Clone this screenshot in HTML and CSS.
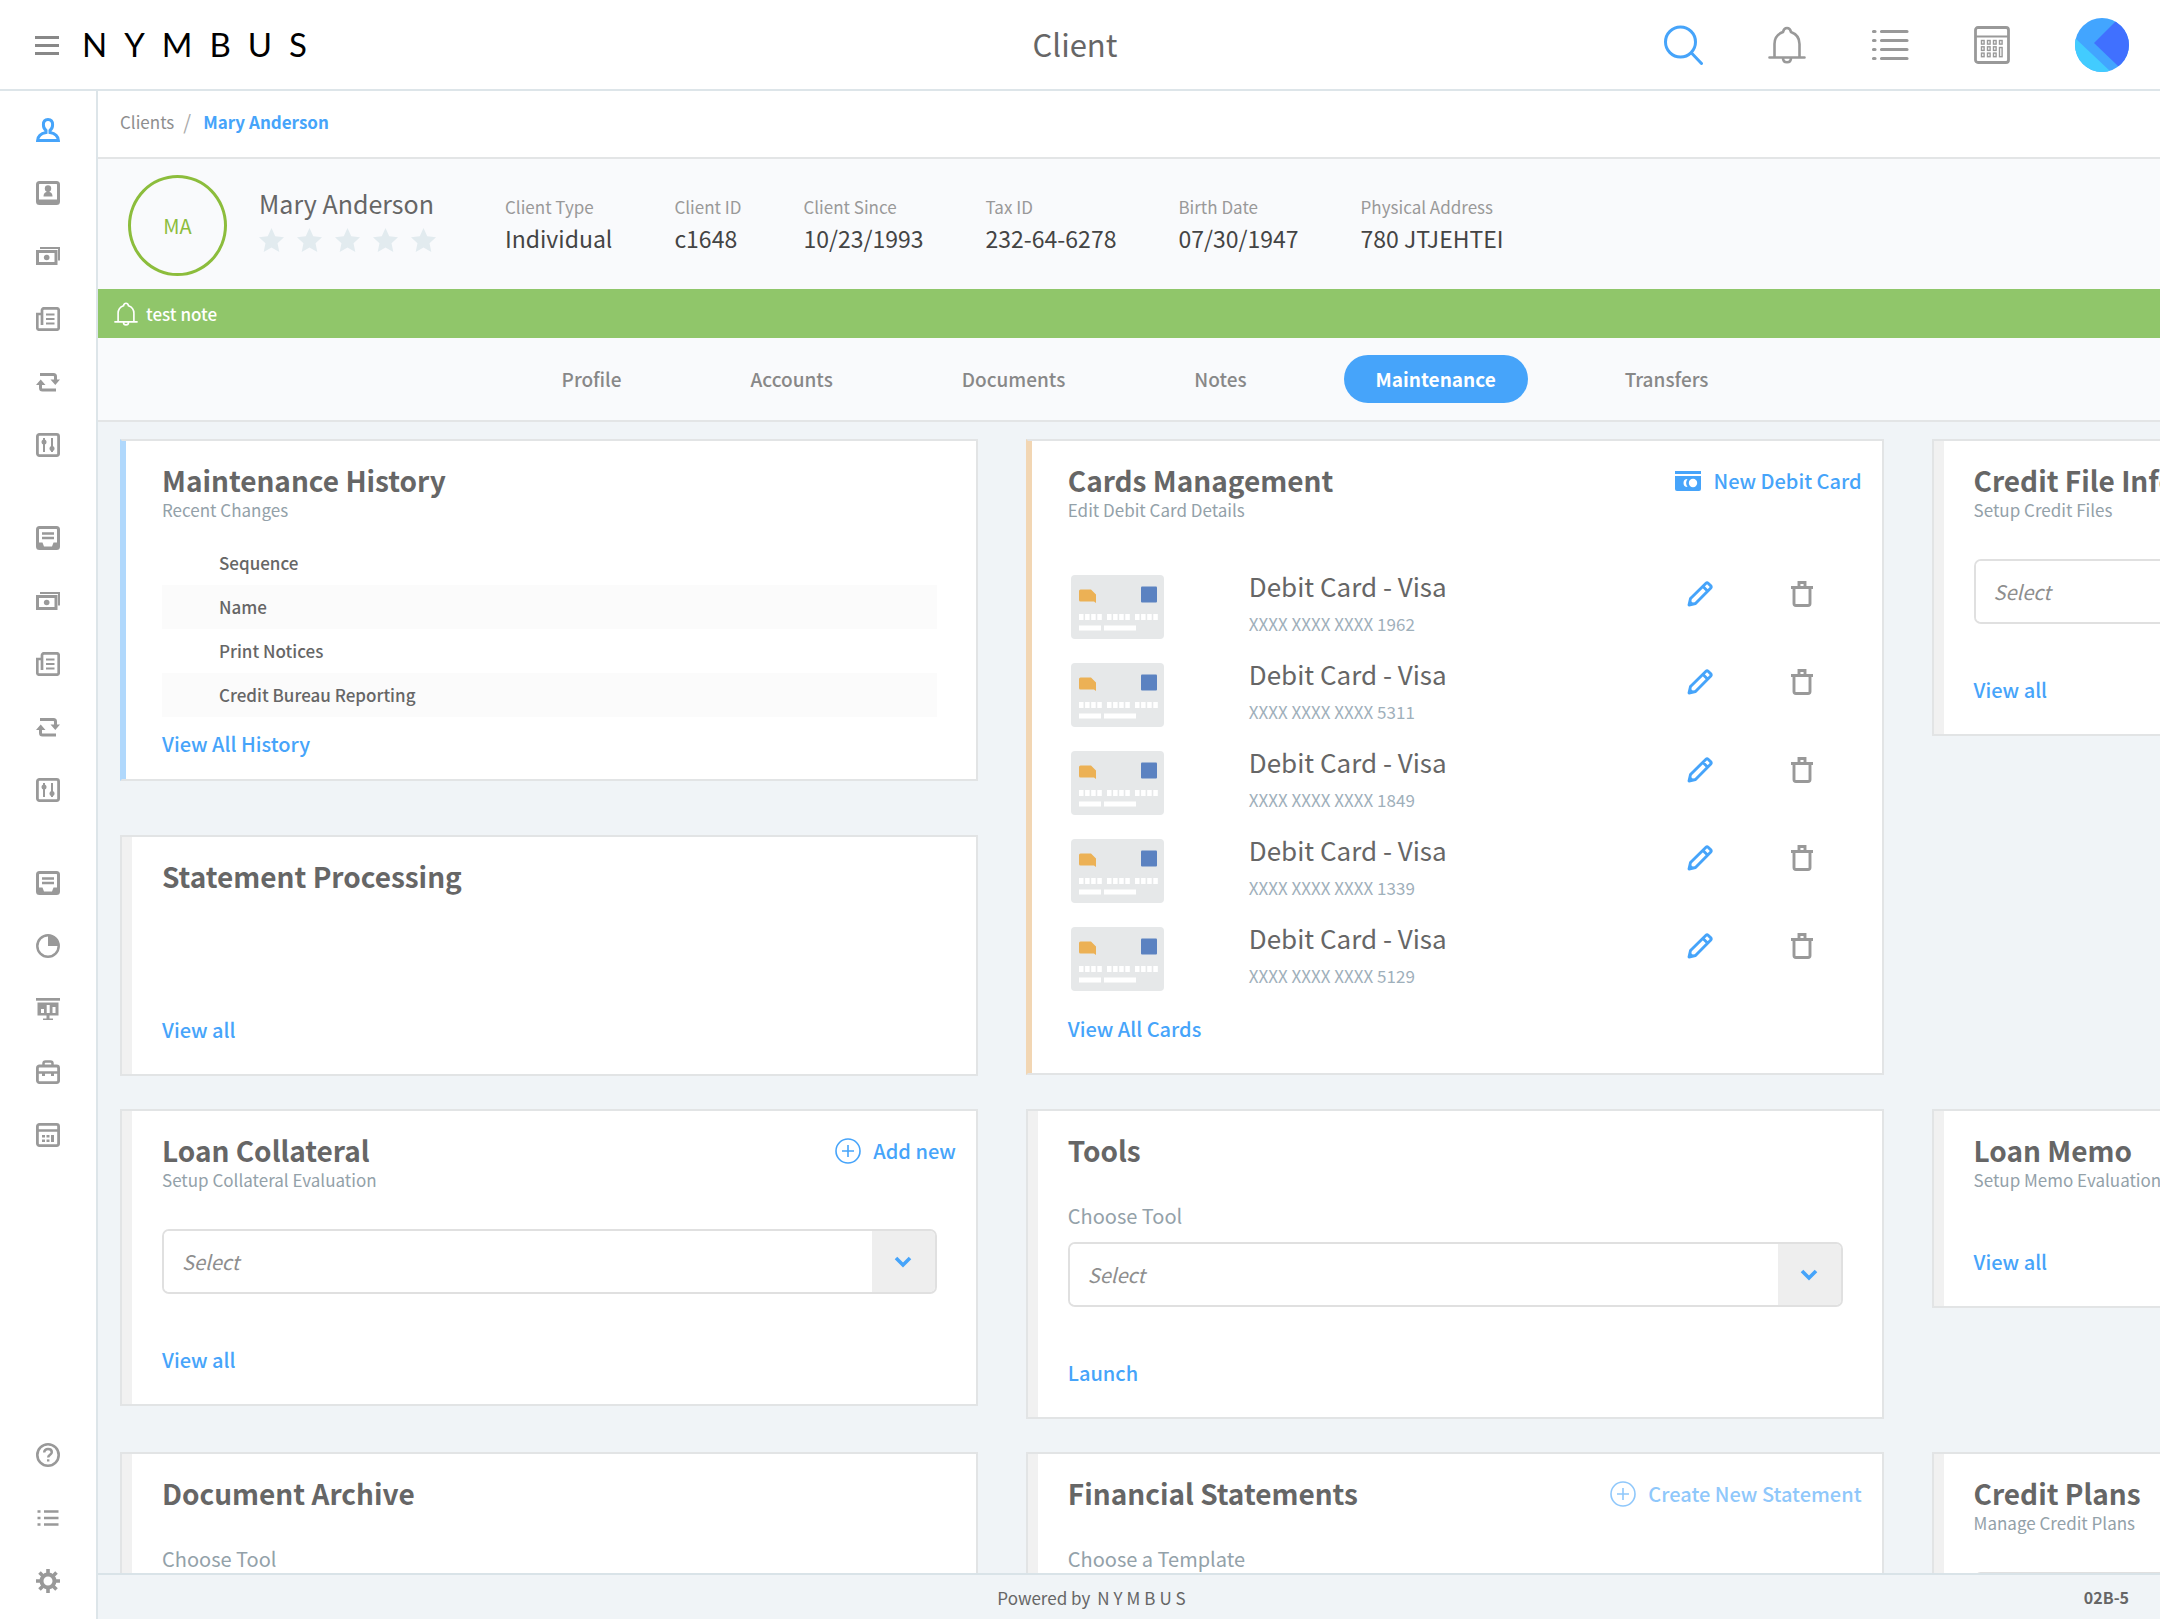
FILE: index.html
```html
<!DOCTYPE html>
<html lang="en">
<head>
  <meta charset="UTF-8" />
  <meta name="viewport" content="width=device-width, initial-scale=1.0"/>
  <title>Client | Nymbus</title>
  <link rel="stylesheet" href="styles.css">
</head>
<body>

  <!-- icon sprite -->
  <svg class="sprite" width="0" height="0" aria-hidden="true">
    <symbol id="i-user" viewBox="0 0 24 24"><path d="M12 1.500c-3 0-4.600 2.200-4.600 5.200 0 2.600 1.200 4.600 2.600 5.700v2.100C5.500 15.300 2 17 1.600 22.500h20.800C22 17 18.500 15.300 14 14.500v-2.100c1.400-1.100 2.600-3.100 2.600-5.700 0-3-1.600-5.200-4.600-5.200z" fill="none" stroke="currentColor" stroke-width="3"/></symbol>
    <symbol id="i-badge" viewBox="0 0 24 24"><rect x="1.500" y="1.500" width="21" height="21" rx="2" fill="none" stroke="currentColor" stroke-width="3"/><path d="M1 18.500h22V23H1z" fill="currentColor"/><circle cx="12" cy="7.500" r="3.200" fill="currentColor"/><path d="M10.500 9h3v2c2 .4 3 1.800 3 4.500h-9c0-2.700 1-4.100 3-4.500z" fill="currentColor"/></symbol>
    <symbol id="i-cash" viewBox="0 0 24 24"><rect x="1.500" y="7.500" width="18.500" height="12" fill="none" stroke="currentColor" stroke-width="3"/><path d="M4 4h19v12.500" fill="none" stroke="currentColor" stroke-width="2"/><circle cx="10.700" cy="13.500" r="2.800" fill="currentColor"/></symbol>
    <symbol id="i-news" viewBox="0 0 24 24"><path d="M6 3.300a2 2 0 0 1 2-2h12.700a2 2 0 0 1 2 2v17.400a2 2 0 0 1-2 2H3.300a2 2 0 0 1-2-2V7H6M6 3v15" fill="none" stroke="currentColor" stroke-width="2.700"/><path d="M10 7.500h8.500M10 12h8.500M10 16.500h8.500" stroke="currentColor" stroke-width="2.200"/></symbol>
    <symbol id="i-sync" viewBox="0 0 24 24"><path d="M4 4.500h13.500a2 2 0 0 1 2 2v4M20 20H6.500a2 2 0 0 1-2-2v-4" fill="none" stroke="currentColor" stroke-width="3"/><path d="M14.500 9.500H24l-4.700 5.500zM0 15l4.700-5.500L9.500 15z" fill="currentColor"/></symbol>
    <symbol id="i-sliders" viewBox="0 0 24 24"><rect x="1.400" y="1.400" width="21.200" height="21.200" rx="2" fill="none" stroke="currentColor" stroke-width="2.800"/><path d="M8 5v14M16 5v14" stroke="currentColor" stroke-width="2"/><circle cx="8" cy="9" r="2.500" fill="currentColor"/><circle cx="16" cy="15.500" r="2.500" fill="currentColor"/></symbol>
    <symbol id="i-inbox" viewBox="0 0 24 24"><rect x="1.500" y="1.500" width="21" height="21" rx="2" fill="none" stroke="currentColor" stroke-width="3"/><path d="M1 16.500h5.500l1.500 4h8l1.500-4H23V23H1z" fill="currentColor"/><path d="M6 7.500h12M6 12h12" stroke="currentColor" stroke-width="2.400"/></symbol>
    <symbol id="i-pie" viewBox="0 0 24 24"><circle cx="12" cy="12" r="10.700" fill="none" stroke="currentColor" stroke-width="2.500"/><path d="M12 1v11h11A11 11 0 0 0 12 1z" fill="currentColor"/></symbol>
    <symbol id="i-board" viewBox="0 0 24 24"><path d="M0 1h24v2.700H0z" fill="currentColor"/><path fill-rule="evenodd" d="M1.500 5.500h21v13h-9v3H17V23H7v-1.500h3.500v-3h-9zM5 12v4h3v-4zm5.700-4v8h3V8zM16.500 10v6h3v-6z" fill="currentColor"/></symbol>
    <symbol id="i-case" viewBox="0 0 24 24"><rect x="1.400" y="6" width="21.200" height="16.600" rx="2" fill="none" stroke="currentColor" stroke-width="2.800"/><path d="M7.500 5.500V3.500a2 2 0 0 1 2-2h5a2 2 0 0 1 2 2v2M1 12.500h22" fill="none" stroke="currentColor" stroke-width="2.500"/><path d="M6 12h3v4H6zM15 12h3v4h-3z" fill="currentColor"/></symbol>
    <symbol id="i-calc-sm" viewBox="0 0 24 24"><rect x="1.400" y="1.400" width="21.200" height="21.200" rx="2" fill="none" stroke="currentColor" stroke-width="2.800"/><path d="M1 7.500h22" stroke="currentColor" stroke-width="2.500"/><path d="M6 12h3v2.500H6zM10.500 12h3v2.500h-3zM6 16.500h3V19H6zM10.500 16.500h3V19h-3zM15 12h3v7h-3z" fill="currentColor"/></symbol>
    <symbol id="i-help" viewBox="0 0 24 24"><circle cx="12" cy="12" r="10.700" fill="none" stroke="currentColor" stroke-width="2.600"/><path d="M8.200 9.500c0-2.100 1.600-3.500 3.800-3.500s3.800 1.300 3.800 3.200c0 2.600-3.600 2.600-3.600 5.300" fill="none" stroke="currentColor" stroke-width="2.500"/><path d="M11 16.300h2.400v2.200H11z" fill="currentColor"/></symbol>
    <symbol id="i-list-sm" viewBox="0 0 24 24"><path d="M1.500 5.500h3M1.500 12h3M1.500 18.500h3M8 5.500h14.500M8 12h14.500M8 18.500h14.500" stroke="currentColor" stroke-width="2.400"/></symbol>
    <symbol id="i-gear" viewBox="0 0 24 24"><circle cx="12" cy="12" r="6.500" fill="none" stroke="currentColor" stroke-width="4"/><path d="M12 0v5M12 19v5M0 12h5M19 12h5M3.500 3.500l3.500 3.500M17 17l3.500 3.500M3.500 20.500L7 17M17 7l3.500-3.500" stroke="currentColor" stroke-width="3.600"/></symbol>
    <symbol id="i-search" viewBox="0 0 40 40"><circle cx="17.500" cy="17" r="15" fill="none" stroke="currentColor" stroke-width="3"/><path d="M28.500 28L38.500 38.500" stroke="currentColor" stroke-width="3" stroke-linecap="round"/></symbol>
    <symbol id="i-bell" viewBox="0 0 38 38"><path d="M1.500 31.500h35M6.500 31.500V18c0-5.500 3-10 8.500-12 .6-2.600 2-4 4-4s3.400 1.400 4 4c5.500 2 8.500 6.500 8.500 12v13.500M15 32c0 2.500 1.500 4.300 4 4.300s4-1.800 4-4.300" fill="none" stroke="currentColor" stroke-width="2.600" stroke-linecap="round"/></symbol>
    <symbol id="i-list" viewBox="0 0 38 34"><path d="M2.500 3.500h1.500M2.500 12.500h1.500M2.500 21.500h1.500M2.500 30.500h1.500M10.500 3.500h25.500M10.500 12.500h25.500M10.500 21.500h25.500M10.500 30.500h25.500" stroke="currentColor" stroke-width="3.200" stroke-linecap="round"/></symbol>
    <symbol id="i-calc" viewBox="0 0 36 38"><rect x="1.500" y="1.500" width="33" height="35" rx="2.500" fill="none" stroke="currentColor" stroke-width="2.800"/><path d="M1.500 10.500h33" stroke="currentColor" stroke-width="2"/><g fill="none" stroke="currentColor" stroke-width="1.400"><rect x="7.500" y="14.500" width="2.600" height="3.600"/><rect x="13.500" y="14.500" width="2.600" height="3.600"/><rect x="19.500" y="14.500" width="2.600" height="3.600"/><rect x="25.500" y="14.500" width="2.600" height="3.600"/><rect x="7.500" y="20.800" width="2.600" height="3.600"/><rect x="13.500" y="20.800" width="2.600" height="3.600"/><rect x="19.500" y="20.800" width="2.600" height="3.600"/><rect x="7.500" y="27.100" width="2.600" height="3.600"/><rect x="13.500" y="27.100" width="2.600" height="3.600"/><rect x="19.500" y="27.100" width="2.600" height="3.600"/><rect x="25.500" y="21.500" width="2.600" height="9.200"/></g></symbol>
    <symbol id="i-star" viewBox="0 0 24 24"><path d="M12 0l3.600 7.800 8.400 1-6.200 5.800 1.700 8.400L12 18.800 4.500 23l1.700-8.400L0 8.800l8.400-1z" fill="currentColor"/></symbol>
    <symbol id="i-plus" viewBox="0 0 26 26"><circle cx="13" cy="13" r="12" fill="none" stroke="currentColor" stroke-width="1.600"/><path d="M13 7v12M7 13h12" stroke="currentColor" stroke-width="1.600"/></symbol>
    <symbol id="i-newcard" viewBox="0 0 26 20"><path d="M0 0h26v3H0z" fill="currentColor"/><path d="M0 5h26v13a2 2 0 0 1-2 2H2a2 2 0 0 1-2-2z" fill="currentColor"/><circle cx="18" cy="12" r="4.200" fill="#fff"/><path d="M12.500 8a4 4 0 1 0 0 8 7 7 0 0 1 0-8z" fill="#fff"/></symbol>
    <symbol id="i-pencil" viewBox="0 0 26 26"><path d="M2 24l1.500-6.500L19 2.200c.6-.6 1.500-.6 2.100 0l2.700 2.700c.6.600.6 1.500 0 2.100L8.500 22.500zM16 5.500l4.500 4.500" fill="none" stroke="currentColor" stroke-width="2.900" stroke-linejoin="round"/><path d="M1 25l2-6 4 4z" fill="currentColor"/></symbol>
    <symbol id="i-trash" viewBox="0 0 22 26"><path d="M0 6.500h22M8 6V1.500h6V6M3 6.500v16a2 2 0 0 0 2 2h12a2 2 0 0 0 2-2v-16" fill="none" stroke="currentColor" stroke-width="2.900"/></symbol>
    <symbol id="i-chevron" viewBox="0 0 18 12"><path d="M2 2l7 7 7-7" fill="none" stroke="currentColor" stroke-width="3.600"/></symbol>
    <symbol id="i-card" viewBox="0 0 93 64"><rect width="93" height="64" rx="4" fill="#e6e8e9"/><path d="M8 16q0-1.500 1.500-1.500H20l5 5V28l-2-1.500H9.500Q8 26.500 8 25z" fill="#ecb155"/><rect x="70" y="11.500" width="16" height="16" rx="1" fill="#5b82c1"/><path d="M8 42h23M36 42h23M64 42h23" stroke="#fff" stroke-width="6" stroke-dasharray="4.500 1.600"/><path d="M8 53h22M33 53h32" stroke="#fff" stroke-width="5"/></symbol>
  </svg>

  <header class="topbar">
    <div class="brand">
      <button class="icon-btn menu-btn" type="button" aria-label="Menu"><span></span><span></span><span></span></button>
      <a href="#" class="logo">NYMBUS</a>
    </div>
    <h1>Client</h1>
    <div class="top-actions">
      <button class="icon-btn active" type="button" aria-label="Search"><svg width="40" height="40"><use href="#i-search"/></svg></button>
      <button class="icon-btn" type="button" aria-label="Notifications"><svg width="38" height="38"><use href="#i-bell"/></svg></button>
      <button class="icon-btn" type="button" aria-label="Tasks"><svg width="38" height="34"><use href="#i-list"/></svg></button>
      <button class="icon-btn" type="button" aria-label="Calculator"><svg width="36" height="38"><use href="#i-calc"/></svg></button>
      <button class="icon-btn" type="button" aria-label="Account">
        <svg class="account" width="54" height="54" viewBox="0 0 54 54">
          <defs><clipPath id="round"><circle cx="27" cy="27" r="27"/></clipPath></defs>
          <g clip-path="url(#round)">
            <path d="M0 0h54v54H0z" fill="#42a5ff"/>
            <path d="M0 20l36 34H0z" fill="#42ccff"/>
            <path d="M42 2L19 25l24 23 13 8V0z" fill="#4070ff"/>
          </g>
        </svg>
      </button>
    </div>
  </header>

  <div class="layout">
    <nav class="sidebar" aria-label="Main">
      <div class="side-group">
        <a href="#" class="active" aria-label="Clients"><svg><use href="#i-user"/></svg></a>
        <a href="#" aria-label="Contacts"><svg><use href="#i-badge"/></svg></a>
        <a href="#" aria-label="Cash"><svg><use href="#i-cash"/></svg></a>
        <a href="#" aria-label="Reports"><svg><use href="#i-news"/></svg></a>
        <a href="#" aria-label="Transfers"><svg><use href="#i-sync"/></svg></a>
        <a href="#" aria-label="Controls"><svg><use href="#i-sliders"/></svg></a>
      </div>
      <div class="side-group">
        <a href="#" aria-label="Inbox"><svg><use href="#i-inbox"/></svg></a>
        <a href="#" aria-label="Payments"><svg><use href="#i-cash"/></svg></a>
        <a href="#" aria-label="Statements"><svg><use href="#i-news"/></svg></a>
        <a href="#" aria-label="Exchange"><svg><use href="#i-sync"/></svg></a>
        <a href="#" aria-label="Adjustments"><svg><use href="#i-sliders"/></svg></a>
      </div>
      <div class="side-group">
        <a href="#" aria-label="Drawer"><svg><use href="#i-inbox"/></svg></a>
        <a href="#" aria-label="Analytics"><svg><use href="#i-pie"/></svg></a>
        <a href="#" aria-label="Board"><svg><use href="#i-board"/></svg></a>
        <a href="#" aria-label="Business"><svg><use href="#i-case"/></svg></a>
        <a href="#" aria-label="Ledger"><svg><use href="#i-calc-sm"/></svg></a>
      </div>
      <div class="side-group side-bottom">
        <a href="#" aria-label="Help"><svg><use href="#i-help"/></svg></a>
        <a href="#" aria-label="Lists"><svg><use href="#i-list-sm"/></svg></a>
        <a href="#" aria-label="Settings"><svg><use href="#i-gear"/></svg></a>
      </div>
    </nav>

    <main class="content">
      <div class="breadcrumb">
        <a href="#">Clients</a>
        <span class="sep">/</span>
        <a href="#" class="current">Mary Anderson</a>
      </div>

      <section class="client">
        <div class="avatar">MA</div>
        <div class="client-name">
          <h2>Mary Anderson</h2>
          <div class="stars">
            <svg><use href="#i-star"/></svg>
            <svg><use href="#i-star"/></svg>
            <svg><use href="#i-star"/></svg>
            <svg><use href="#i-star"/></svg>
            <svg><use href="#i-star"/></svg>
          </div>
        </div>
        <dl class="facts">
          <div><dt>Client Type</dt><dd>Individual</dd></div>
          <div><dt>Client ID</dt><dd>c1648</dd></div>
          <div><dt>Client Since</dt><dd>10/23/1993</dd></div>
          <div><dt>Tax ID</dt><dd>232-64-6278</dd></div>
          <div><dt>Birth Date</dt><dd>07/30/1947</dd></div>
          <div><dt>Physical Address</dt><dd>780 JTJEHTEI</dd></div>
        </dl>
      </section>

      <div class="note">
        <svg width="24" height="26"><use href="#i-bell"/></svg>
        <span>test note</span>
      </div>

      <nav class="tabs" aria-label="Client sections">
        <a href="#">Profile</a>
        <a href="#">Accounts</a>
        <a href="#">Documents</a>
        <a href="#">Notes</a>
        <a href="#" class="active">Maintenance</a>
        <a href="#">Transfers</a>
      </nav>

      <div class="board">
        <div class="stack">
          <section class="card blue">
            <div class="card-head">
              <div>
                <h3>Maintenance History</h3>
                <p class="sub">Recent Changes</p>
              </div>
            </div>
            <div class="card-body">
              <ul class="history">
                <li>Sequence</li>
                <li>Name</li>
                <li>Print Notices</li>
                <li>Credit Bureau Reporting</li>
              </ul>
              <a href="#" class="link">View All History</a>
            </div>
          </section>

          <section class="card statement">
            <div class="card-head"><h3>Statement Processing</h3></div>
            <div class="card-body">
              <a href="#" class="link">View all</a>
            </div>
          </section>
        </div>

        <section class="card orange">
          <div class="card-head">
            <div>
              <h3>Cards Management</h3>
              <p class="sub">Edit Debit Card Details</p>
            </div>
            <button class="action" type="button"><svg width="26" height="20"><use href="#i-newcard"/></svg>New Debit Card</button>
          </div>
          <div class="card-body">
            <ul class="debit-list">
              <li>
                <svg class="plastic"><use href="#i-card"/></svg>
                <div class="debit"><strong>Debit Card - Visa</strong><span>XXXX XXXX XXXX 1962</span></div>
                <button class="icon-btn active" type="button" aria-label="Edit"><svg width="26" height="26"><use href="#i-pencil"/></svg></button>
                <button class="icon-btn" type="button" aria-label="Delete"><svg width="22" height="26"><use href="#i-trash"/></svg></button>
              </li>
              <li>
                <svg class="plastic"><use href="#i-card"/></svg>
                <div class="debit"><strong>Debit Card - Visa</strong><span>XXXX XXXX XXXX 5311</span></div>
                <button class="icon-btn active" type="button" aria-label="Edit"><svg width="26" height="26"><use href="#i-pencil"/></svg></button>
                <button class="icon-btn" type="button" aria-label="Delete"><svg width="22" height="26"><use href="#i-trash"/></svg></button>
              </li>
              <li>
                <svg class="plastic"><use href="#i-card"/></svg>
                <div class="debit"><strong>Debit Card - Visa</strong><span>XXXX XXXX XXXX 1849</span></div>
                <button class="icon-btn active" type="button" aria-label="Edit"><svg width="26" height="26"><use href="#i-pencil"/></svg></button>
                <button class="icon-btn" type="button" aria-label="Delete"><svg width="22" height="26"><use href="#i-trash"/></svg></button>
              </li>
              <li>
                <svg class="plastic"><use href="#i-card"/></svg>
                <div class="debit"><strong>Debit Card - Visa</strong><span>XXXX XXXX XXXX 1339</span></div>
                <button class="icon-btn active" type="button" aria-label="Edit"><svg width="26" height="26"><use href="#i-pencil"/></svg></button>
                <button class="icon-btn" type="button" aria-label="Delete"><svg width="22" height="26"><use href="#i-trash"/></svg></button>
              </li>
              <li>
                <svg class="plastic"><use href="#i-card"/></svg>
                <div class="debit"><strong>Debit Card - Visa</strong><span>XXXX XXXX XXXX 5129</span></div>
                <button class="icon-btn active" type="button" aria-label="Edit"><svg width="26" height="26"><use href="#i-pencil"/></svg></button>
                <button class="icon-btn" type="button" aria-label="Delete"><svg width="22" height="26"><use href="#i-trash"/></svg></button>
              </li>
            </ul>
            <a href="#" class="link">View All Cards</a>
          </div>
        </section>

        <section class="card">
          <div class="card-head">
            <div>
              <h3>Credit File Info</h3>
              <p class="sub">Setup Credit Files</p>
            </div>
          </div>
          <div class="card-body">
            <div class="select">
              <select aria-label="Credit file"><option>Select</option></select>
              <span class="arrow"><svg width="18" height="12"><use href="#i-chevron"/></svg></span>
            </div>
            <a href="#" class="link">View all</a>
          </div>
        </section>

        <section class="card">
          <div class="card-head">
            <div>
              <h3>Loan Collateral</h3>
              <p class="sub">Setup Collateral Evaluation</p>
            </div>
            <button class="action" type="button"><svg width="26" height="26"><use href="#i-plus"/></svg>Add new</button>
          </div>
          <div class="card-body">
            <div class="select">
              <select aria-label="Collateral"><option>Select</option></select>
              <span class="arrow"><svg width="18" height="12"><use href="#i-chevron"/></svg></span>
            </div>
            <a href="#" class="link">View all</a>
          </div>
        </section>

        <section class="card">
          <div class="card-head"><h3>Tools</h3></div>
          <div class="card-body">
            <label for="tool">Choose Tool</label>
            <div class="select">
              <select id="tool"><option>Select</option></select>
              <span class="arrow"><svg width="18" height="12"><use href="#i-chevron"/></svg></span>
            </div>
            <a href="#" class="link">Launch</a>
          </div>
        </section>

        <section class="card memo">
          <div class="card-head">
            <div>
              <h3>Loan Memo</h3>
              <p class="sub">Setup Memo Evaluation</p>
            </div>
          </div>
          <div class="card-body">
            <a href="#" class="link">View all</a>
          </div>
        </section>

        <section class="card">
          <div class="card-head"><h3>Document Archive</h3></div>
          <div class="card-body">
            <label for="archive">Choose Tool</label>
            <div class="select">
              <select id="archive"><option>Select</option></select>
              <span class="arrow"><svg width="18" height="12"><use href="#i-chevron"/></svg></span>
            </div>
          </div>
        </section>

        <section class="card">
          <div class="card-head">
            <h3>Financial Statements</h3>
            <button class="action" type="button" disabled><svg width="26" height="26"><use href="#i-plus"/></svg>Create New Statement</button>
          </div>
          <div class="card-body">
            <label for="template">Choose a Template</label>
            <div class="select">
              <select id="template"><option>Select</option></select>
              <span class="arrow"><svg width="18" height="12"><use href="#i-chevron"/></svg></span>
            </div>
          </div>
        </section>

        <section class="card">
          <div class="card-head">
            <div>
              <h3>Credit Plans</h3>
              <p class="sub">Manage Credit Plans</p>
            </div>
          </div>
          <div class="card-body">
            <div class="select">
              <select aria-label="Credit plan"><option>Select</option></select>
              <span class="arrow"><svg width="18" height="12"><use href="#i-chevron"/></svg></span>
            </div>
          </div>
        </section>
      </div>

      <footer>
        <span class="powered">Powered by <span class="mark">NYMBUS</span></span>
        <span class="code">02B-5</span>
      </footer>
    </main>
  </div>

</body>
</html>
```
FILE: styles.css
```css
* {
  box-sizing: border-box;
}

body {
  margin: 0;
  height: 100vh;
  display: flex;
  flex-direction: column;
  overflow: hidden;
  font-family: "Noto Sans CJK SC", "Open Sans", sans-serif;
  font-size: 17px;
  color: #666;
  background: #fff;
}

h1, h2, h3, p, ul, dl, dd {
  margin: 0;
  padding: 0;
}

ul {
  list-style: none;
}

a {
  color: inherit;
  text-decoration: none;
}

svg {
  display: block;
  flex: none;
}

.sprite {
  position: absolute;
}

button {
  padding: 0;
  border: none;
  background: none;
  font: inherit;
  color: inherit;
  cursor: pointer;
}

.icon-btn {
  display: flex;
  align-items: center;
  justify-content: center;
  color: #999;
}

.active {
  color: #46a4fa;
}

/* top bar */
.topbar {
  display: grid;
  grid-template-columns: 1fr auto 1fr;
  align-items: center;
  height: 91px;
  padding: 1px 31px 0 35px;
  border-bottom: 2px solid #dde5e9;
}

.topbar h1 {
  padding: 0 14px 2px 0;
  font-size: 31px;
  font-weight: 400;
  line-height: 44px;
  color: #666;
}

.brand {
  display: flex;
  align-items: center;
  gap: 23px;
}

.menu-btn {
  flex-direction: column;
  gap: 5px;
}

.menu-btn span {
  width: 24px;
  height: 3px;
  background: #888;
}

.logo {
  padding-bottom: 2px;
  font-family: Lato, sans-serif;
  font-size: 33px;
  line-height: 40px;
  letter-spacing: 17px;
  color: #000;
}

.top-actions {
  display: flex;
  justify-content: flex-end;
  align-items: center;
  gap: 65px;
}

/* sidebar */
.layout {
  flex: 1;
  display: flex;
  min-height: 0;
}

.sidebar {
  flex: none;
  display: flex;
  flex-direction: column;
  align-items: center;
  gap: 69px;
  width: 98px;
  padding: 27px 0 26px;
  border-right: 2px solid #dde5e9;
  color: #999;
}

.side-group {
  display: flex;
  flex-direction: column;
  gap: 39px;
}

.side-bottom {
  margin-top: auto;
}

.sidebar svg {
  width: 24px;
  height: 24px;
}

/* content */
.content {
  flex: 1;
  min-width: 0;
  display: flex;
  flex-direction: column;
  background: #f0f4f7;
}

.breadcrumb {
  flex: none;
  display: flex;
  align-items: center;
  gap: 9px;
  height: 68px;
  padding: 0 22px 6px;
  background: #fff;
  border-bottom: 2px solid #e3e5e6;
  color: #8e8e8e;
}

.breadcrumb .sep {
  font-size: 20px;
  color: #aaa;
}

.breadcrumb .current {
  margin-left: 3px;
  color: #46a4fa;
  font-weight: 700;
}

.client {
  flex: none;
  display: flex;
  align-items: center;
  height: 130px;
  padding: 2px 0 0 30px;
  background: #f9fafc;
}

.avatar {
  display: flex;
  align-items: center;
  justify-content: center;
  width: 99px;
  height: 101px;
  margin-right: 32px;
  border: 3px solid #8cbd3c;
  border-radius: 50%;
  font-size: 20px;
  color: #8cbd3c;
}

.client-name {
  margin-right: 69px;
  padding-bottom: 12px;
}

.client-name h2 {
  margin-bottom: 7px;
  font-size: 25px;
  font-weight: 400;
  line-height: 36px;
  color: #666;
}

.stars {
  display: flex;
  gap: 13px;
  color: #e2ebef;
}

.stars svg {
  width: 25px;
  height: 25px;
}

.facts {
  display: flex;
  gap: 62px;
}

.facts dt {
  font-size: 17px;
  line-height: 32px;
  color: #999;
}

.facts dd {
  padding-bottom: 6px;
  font-size: 23px;
  line-height: 30px;
  color: #444;
}

.note {
  flex: none;
  display: flex;
  align-items: center;
  gap: 8px;
  height: 49px;
  padding-left: 16px;
  background: #90c66a;
  color: #fff;
  font-weight: 500;
}

.tabs {
  flex: none;
  display: flex;
  align-items: center;
  justify-content: center;
  gap: 65px;
  height: 84px;
  padding-left: 12px;
  background: #f9fafc;
  border-bottom: 2px solid #e3e5e6;
  font-size: 19px;
  font-weight: 500;
  line-height: 48px;
  color: #888;
}

.tabs a {
  padding: 0 32px;
  border-radius: 24px;
}

.tabs .active {
  background: #46a4fa;
  color: #fff;
  font-weight: 700;
}

/* card board, scrolls both ways */
.board {
  flex: 1;
  min-height: 0;
  display: grid;
  grid-template-columns: repeat(3, calc(42% + 1px));
  align-content: start;
  align-items: start;
  gap: 33px 48px;
  padding: 17px 0 33px 22px;
  overflow: auto;
  scrollbar-width: none;
}

.stack {
  display: flex;
  flex-direction: column;
  gap: 54px;
}

.card {
  background: #fff;
  border: 2px solid #e2e4e5;
  box-shadow: inset 10px 0 #f1f1f1;
}

.card.blue {
  border-left-color: #b0d8fc;
  box-shadow: inset 4px 0 #b0d8fc;
}

.card.blue .card-body {
  padding-top: 20px;
  padding-bottom: 22px;
}

.card.blue .link {
  margin-top: 14px;
}

.card.orange {
  border-left-color: #f2d6b3;
  box-shadow: inset 4px 0 #f2d6b3;
}

.card-head {
  display: flex;
  justify-content: space-between;
  align-items: flex-start;
  min-height: 80px;
  padding: 21px 20px 0 40px;
}

.card h3 {
  font-size: 28px;
  font-weight: 700;
  line-height: 36px;
  color: #666;
}

.sub {
  font-size: 17px;
  line-height: 23px;
  color: #93a1a9;
}

.card-body {
  padding: 0 39px 31px 40px;
}

.card-body label {
  display: block;
  padding-top: 11px;
  font-size: 20px;
  line-height: 28px;
  color: #93a1a9;
}

.link {
  display: block;
  width: fit-content;
  font-size: 20px;
  font-weight: 500;
  line-height: 26px;
  color: #46a4fa;
}

.action {
  display: flex;
  align-items: center;
  gap: 12px;
  font-size: 20px;
  font-weight: 500;
  line-height: 38px;
  color: #46a4fa;
}

.action:disabled {
  opacity: 0.6;
  cursor: default;
}

.statement .link {
  margin-top: 100px;
}

.memo .link {
  margin-top: 58px;
}

.history li {
  height: 44px;
  padding-left: 57px;
  line-height: 44px;
  font-weight: 500;
}

.history li:nth-child(even) {
  background: #fbfbfb;
}

.select {
  display: flex;
  height: 65px;
  margin: 38px 0 53px;
  border: 2px solid #e0e0e0;
  border-radius: 7px;
  overflow: hidden;
}

label + .select {
  margin-top: 12px;
}

.select select {
  flex: 1;
  padding: 0 18px;
  appearance: none;
  border: none;
  background: #fff;
  font: italic 20px "Noto Sans CJK SC", sans-serif;
  color: #8e8e8e;
}

.arrow {
  display: flex;
  align-items: center;
  justify-content: center;
  width: 63px;
  background: #eee;
  color: #46a4fa;
}

.debit-list {
  display: flex;
  flex-direction: column;
  gap: 24px;
  padding: 54px 30px 25px 3px;
}

.debit-list li {
  display: flex;
  align-items: flex-start;
}

.plastic {
  width: 93px;
  height: 64px;
}

.debit {
  flex: 1;
  height: 64px;
  margin-left: 85px;
}

.debit strong,
.debit span {
  display: block;
}

.debit strong {
  margin-top: -7px;
  font-size: 26px;
  font-weight: 400;
  line-height: 36px;
  color: #666;
}

.debit span {
  font-size: 17px;
  line-height: 40px;
  color: #9fb0bb;
}

.debit-list .icon-btn {
  margin: 6px 0 0 78px;
}

/* footer */
footer {
  flex: none;
  display: grid;
  grid-template-columns: 1fr auto 1fr;
  align-items: center;
  height: 46px;
  padding-right: 31px;
  border-top: 2px solid #d9e3e8;
  font-size: 17px;
}

.powered {
  grid-column: 2;
  padding-right: 40px;
}

.mark {
  margin-left: 3px;
  letter-spacing: 4px;
}

.code {
  justify-self: end;
  font-size: 16px;
  font-weight: 700;
}
```
